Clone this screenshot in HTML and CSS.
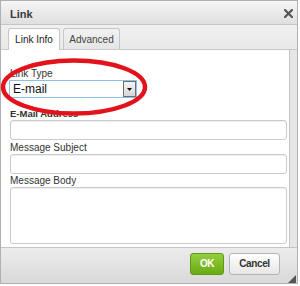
FILE: index.html
```html
<!DOCTYPE html>
<html>
<head>
<meta charset="utf-8">
<link rel="stylesheet" href="styles.css">
</head>
<body>
<div class="dialog">
  <div class="titlebar">
    <span class="title">Link</span>
    <svg class="close" width="9" height="9" viewBox="0 0 9 9"><path d="M1 1 L8 8 M8 1 L1 8" stroke="#555" stroke-width="2.2" stroke-linecap="square"/></svg>
  </div>
  <div class="tabs">
    <div class="tab active">Link Info</div>
    <div class="tab">Advanced</div>
  </div>
  <div class="main">
    <div class="panel">
      <div class="label l-type">Link Type</div>
      <div class="select">
        <span class="select-text">E-mail</span>
        <span class="select-btn"><svg width="5" height="3" viewBox="0 0 5 3"><path d="M0 0 H5 L2.5 3 Z" fill="#111"/></svg></span>
      </div>
      <div class="label l-email">E-Mail Address</div>
      <div class="input"></div>
      <div class="label l-subj">Message Subject</div>
      <div class="input"></div>
      <div class="label l-body">Message Body</div>
      <div class="input textarea"></div>
    </div>
    <div class="gutter"></div>
  </div>
  <div class="footer">
    <div class="btn ok">OK</div>
    <div class="btn cancel">Cancel</div>
    <svg class="grip" width="8" height="8" viewBox="0 0 8 8"><path d="M8 0 V8 H0 Z" fill="#555"/></svg>
  </div>
  <svg class="annot" width="300" height="286" viewBox="0 0 300 286"><ellipse cx="74" cy="87" rx="71" ry="26.5" fill="none" stroke="#e3121b" stroke-width="4.5"/></svg>
</div>
</body>
</html>
```
FILE: styles.css
```css
html, body {
  margin: 0;
  padding: 0;
  background: #ffffff;
}
body {
  width: 300px;
  height: 286px;
  overflow: hidden;
  font-family: "Liberation Sans", Arial, sans-serif;
  color: #333;
}
.dialog {
  position: relative;
  width: 298px;
  height: 284px;
  box-sizing: border-box;
  border: 1px solid #b0b0b0;
  display: flex;
  flex-direction: column;
  background: #e8e8e8;
}
.titlebar {
  height: 23px;
  flex: none;
  display: flex;
  justify-content: space-between;
  align-items: flex-start;
  padding: 0 4px 0 9px;
  border-bottom: 1px solid #c4c4c4;
  background: linear-gradient(#f6f6f6, #dfdfdf);
}
.title {
  font-weight: bold;
  font-size: 11px;
  line-height: 20px;
  padding-top: 3px;
  color: #3a3a3a;
}
.close {
  margin-top: 8px;
}
.tabs {
  height: 24px;
  flex: none;
  box-sizing: content-box;
  display: flex;
  align-items: flex-end;
  gap: 3px;
  padding-left: 7px;
  border-bottom: 1px solid #c8c8c8;
  background: linear-gradient(#f0f0f0, #e9e9e9);
}
.tab {
  height: 19px;
  box-sizing: content-box;
  border: 1px solid #c6c6c6;
  border-bottom: none;
  border-radius: 3px 3px 0 0;
  font-size: 10px;
  line-height: 19px;
  padding-top: 1px;
  text-align: center;
  color: #444;
  background: linear-gradient(#f2f2f2, #e6e6e6);
}
.tab.active {
  width: 50px;
  height: 20px;
  margin-bottom: -1px;
  background: #ffffff;
  color: #222;
}
.tab:not(.active) {
  width: 55px;
}
.main {
  flex: 1;
  display: flex;
  min-height: 0;
}
.panel {
  flex: 1;
  background: #ffffff;
  border-right: 1px solid #c4c4c4;
  padding: 0 0 0 9px;
  display: flex;
  flex-direction: column;
}
.gutter {
  width: 7px;
  flex: none;
  background: #e6e6e6;
}
.label {
  font-size: 10px;
  line-height: 12px;
  height: 12px;
  color: #333;
}
.l-type { margin-top: 18px; }
.l-email { margin-top: 10px; font-weight: bold; font-size: 9.5px; }
.l-subj { margin-top: 2px; }
.l-body { margin-top: 1px; }
.select {
  width: 128px;
  height: 18px;
  box-sizing: border-box;
  margin-left: -1px;
  border: 1px solid #8ebde8;
  background: #fff;
  display: flex;
  align-items: stretch;
  justify-content: space-between;
}
.select-text {
  font-size: 12px;
  line-height: 16px;
  padding-left: 3px;
  color: #111;
}
.select-btn {
  width: 13px;
  box-sizing: border-box;
  border: 1px solid #6e6e6e;
  background: linear-gradient(#f4f4f4, #d6d6d6);
  display: flex;
  align-items: center;
  justify-content: center;
}
.input {
  width: 277px;
  height: 20px;
  box-sizing: border-box;
  border: 1px solid #cbcbcb;
  border-radius: 3px;
  background: #fff;
  box-shadow: inset 0 1px 1px #eeeeee;
}
.textarea {
  height: 57px;
}
.footer {
  position: relative;
  height: 30px;
  flex: none;
  border-top: 1px solid #c4c4c4;
  background: linear-gradient(#ececec, #d9d9d9);
  display: flex;
  justify-content: flex-end;
  align-items: flex-start;
  gap: 5px;
  padding: 5px 17px 0 0;
  box-sizing: content-box;
}
.btn {
  height: 22px;
  box-sizing: border-box;
  border-radius: 3px;
  font-size: 10px;
  font-weight: bold;
  letter-spacing: -0.4px;
  line-height: 20px;
  text-align: center;
}
.ok {
  width: 34px;
  border: 1px solid #5e9a13;
  background: linear-gradient(#93cf3f, #6aaa12);
  color: #ffffff;
}
.cancel {
  width: 51px;
  border: 1px solid #b4b4b4;
  background: linear-gradient(#ffffff, #e6e6e6);
  color: #333;
}
.grip {
  position: absolute;
  right: 1px;
  bottom: 0;
}
.annot {
  position: absolute;
  left: -1px;
  top: -1px;
  pointer-events: none;
}
```
